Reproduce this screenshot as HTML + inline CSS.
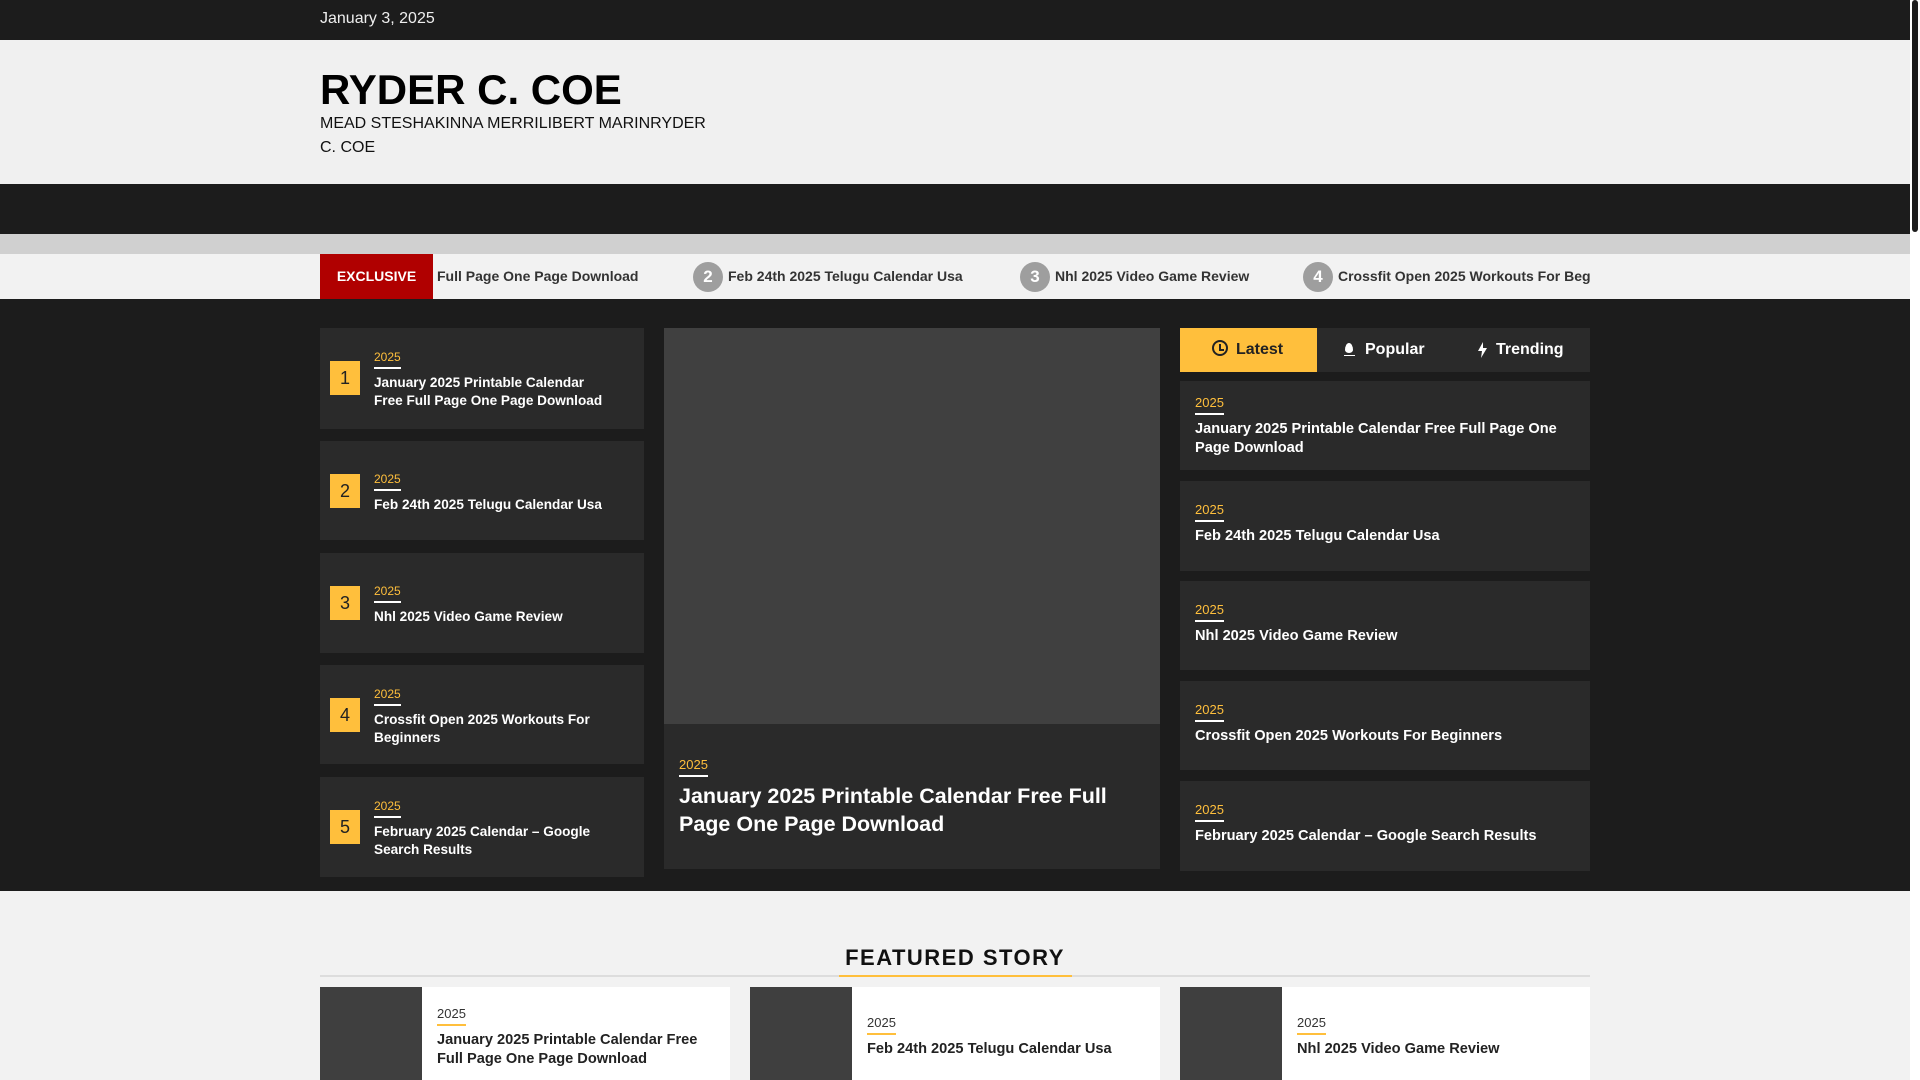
<!DOCTYPE html>
<html><head><meta charset="utf-8"><style>
*{margin:0;padding:0;box-sizing:border-box}
body{width:1920px;height:1080px;overflow:hidden;background:#f2f2f2;font-family:"Liberation Sans",Arial,sans-serif;position:relative}
.a{position:absolute}
.yr{color:#ffbf3c;font-size:12px;display:inline-block;padding-bottom:3px;border-bottom:2px solid #fff}
.t{color:#fff;font-weight:bold;font-size:13.6px;line-height:18px;margin-top:5px}
.lc{position:absolute;left:320px;width:324px;background:#2a2a2a}
.num{position:absolute;left:10px;width:30px;height:34px;background:#ffbf3c;color:#222;font-size:18px;text-align:center;line-height:34px}
.lc .tx{position:absolute;left:54px;right:28px}
.rc{position:absolute;left:1180px;width:410px;background:#2a2a2a;padding:0 15px}
.rc .yr{font-size:13px}
.rc .t{font-size:14.6px;line-height:19px;margin-right:10px}
.fc{position:absolute;top:987px;width:410px;height:93px;background:#fff}
.fc .th{position:absolute;left:0;top:0;width:102px;height:93px;background:#3f3f3f}
.fc .tx{position:absolute;left:117px;right:20px}
.fc .yr{color:#333;border-bottom-color:#ffbf3c;font-size:13px}
.fc .t{color:#222;font-size:14.6px;line-height:19px}
.tk{position:absolute;top:254px;font-size:14px;font-weight:bold;color:#333;line-height:45px;white-space:nowrap}
.cir{display:inline-block;width:30px;height:30px;border-radius:50%;background:#9e9e9e;color:#fff;text-align:center;line-height:30px;font-size:17px;vertical-align:middle;margin-right:5px}
</style></head><body>
<div class="a" style="left:0;top:0;width:1910px;height:40px;background:#1c1c1c"></div>
<div class="a" style="left:320px;top:10px;color:#eee;font-size:16px">January 3, 2025</div>
<div class="a" style="left:0;top:40px;width:1910px;height:144px;background:#f0f0f0"></div>
<div class="a" style="left:320px;top:66px;font-size:42px;font-weight:bold;color:#000">RYDER C. COE</div>
<div class="a" style="left:320px;top:112px;width:398px;font-size:16px;line-height:24px;color:#111">MEAD STESHAKINNA MERRILIBERT MARINRYDER C. COE</div>
<div class="a" style="left:0;top:184px;width:1910px;height:50px;background:#1c1c1c"></div>
<div class="a" style="left:0;top:234px;width:1910px;height:20px;background:#d0d0d0"></div>
<div class="a" style="left:0;top:254px;width:1910px;height:45px;background:#f2f2f2"></div>
<div class="a" style="left:320px;top:254px;width:1270px;height:45px;overflow:hidden">
<div class="tk" style="left:117px;top:0">Full Page One Page Download</div>
<div class="tk" style="left:373px;top:0"><span class="cir">2</span>Feb 24th 2025 Telugu Calendar Usa</div>
<div class="tk" style="left:700px;top:0"><span class="cir">3</span>Nhl 2025 Video Game Review</div>
<div class="tk" style="left:983px;top:0"><span class="cir">4</span>Crossfit Open 2025 Workouts For Beginners</div>
<div class="a" style="left:0;top:0;width:113px;height:45px;background:#b00000;color:#fff;font-weight:bold;font-size:14px;text-align:center;line-height:45px">EXCLUSIVE</div>
</div>
<div class="a" style="left:0;top:299px;width:1910px;height:592px;background:#1c1c1c"></div>

<div class="lc" style="top:328px;height:101px"><div class="num" style="top:33px">1</div><div class="tx" style="top:20px"><span class="yr">2025</span><div class="t">January 2025 Printable Calendar Free Full Page One Page Download</div></div></div>
<div class="lc" style="top:441px;height:99px"><div class="num" style="top:33px">2</div><div class="tx" style="top:29px"><span class="yr">2025</span><div class="t">Feb 24th 2025 Telugu Calendar Usa</div></div></div>
<div class="lc" style="top:553px;height:100px"><div class="num" style="top:33px">3</div><div class="tx" style="top:29px"><span class="yr">2025</span><div class="t">Nhl 2025 Video Game Review</div></div></div>
<div class="lc" style="top:665px;height:99px"><div class="num" style="top:33px">4</div><div class="tx" style="top:20px"><span class="yr">2025</span><div class="t">Crossfit Open 2025 Workouts For Beginners</div></div></div>
<div class="lc" style="top:777px;height:100px"><div class="num" style="top:33px">5</div><div class="tx" style="top:20px"><span class="yr">2025</span><div class="t">February 2025 Calendar – Google Search Results</div></div></div>

<div class="a" style="left:664px;top:328px;width:496px;height:541px;background:#2a2a2a"></div>
<div class="a" style="left:664px;top:328px;width:496px;height:396px;background:#404040"></div>
<div class="a" style="left:679px;top:756px;width:460px"><span class="yr" style="font-size:13px">2025</span><div class="t" style="font-size:21.5px;line-height:28px;margin-top:5px">January 2025 Printable Calendar Free Full Page One Page Download</div></div>

<div class="a" style="left:1180px;top:328px;width:410px;height:44px;background:#2a2a2a"></div>
<div class="a" style="left:1180px;top:328px;width:137px;height:44px;background:#ffbf3c"></div>
<div class="a" style="left:1212px;top:340px;width:16px;height:16px;border:2px solid #222;border-radius:50%"></div>
<div class="a" style="left:1219px;top:344px;width:2px;height:6px;background:#222"></div>
<div class="a" style="left:1219px;top:349px;width:5px;height:2px;background:#222"></div>
<div class="a" style="left:1236px;top:339px;font-size:16px;font-weight:bold;color:#222;line-height:22px">Latest</div>
<div class="a" style="left:1345px;top:343px;width:8px;height:10px;background:#fff;border-radius:50% 50% 50% 50%/70% 70% 30% 30%"></div>
<div class="a" style="left:1344px;top:355px;width:11px;height:1px;background:#fff"></div>
<div class="a" style="left:1365px;top:339px;font-size:16px;font-weight:bold;color:#fff;line-height:22px">Popular</div>
<svg class="a" style="left:1478px;top:342px" width="9" height="16" viewBox="0 0 9 16"><path d="M5 0L0 9h4l-1 7 6-10H5z" fill="#fff"/></svg>
<div class="a" style="left:1496px;top:339px;font-size:16px;font-weight:bold;color:#fff;line-height:22px">Trending</div>

<div class="rc" style="top:381px;height:89px;padding-top:13px"><span class="yr">2025</span><div class="t">January 2025 Printable Calendar Free Full Page One Page Download</div></div>
<div class="rc" style="top:481px;height:90px;padding-top:20px"><span class="yr">2025</span><div class="t">Feb 24th 2025 Telugu Calendar Usa</div></div>
<div class="rc" style="top:581px;height:89px;padding-top:20px"><span class="yr">2025</span><div class="t">Nhl 2025 Video Game Review</div></div>
<div class="rc" style="top:681px;height:89px;padding-top:20px"><span class="yr">2025</span><div class="t">Crossfit Open 2025 Workouts For Beginners</div></div>
<div class="rc" style="top:781px;height:90px;padding-top:20px"><span class="yr">2025</span><div class="t">February 2025 Calendar – Google Search Results</div></div>

<div class="a" style="left:320px;top:975px;width:1270px;height:2px;background:#ddd"></div>
<div class="a" style="left:839px;top:975px;width:233px;height:2px;background:#ffbf3c"></div>
<div class="a" style="left:320px;top:945px;width:1270px;text-align:center;font-size:22px;font-weight:bold;letter-spacing:1.5px;color:#111">FEATURED STORY</div>

<div class="fc" style="left:320px"><div class="th"></div><div class="tx" style="top:18px"><span class="yr">2025</span><div class="t">January 2025 Printable Calendar Free Full Page One Page Download</div></div></div>
<div class="fc" style="left:750px"><div class="th"></div><div class="tx" style="top:27px"><span class="yr">2025</span><div class="t">Feb 24th 2025 Telugu Calendar Usa</div></div></div>
<div class="fc" style="left:1180px"><div class="th"></div><div class="tx" style="top:27px"><span class="yr">2025</span><div class="t">Nhl 2025 Video Game Review</div></div></div>

<div class="a" style="left:1910px;top:0;width:10px;height:1080px;background:#fff"></div>
<div class="a" style="left:1912px;top:0;width:6px;height:232px;background:#1c1c1c;border-radius:3px"></div>
</body></html>
